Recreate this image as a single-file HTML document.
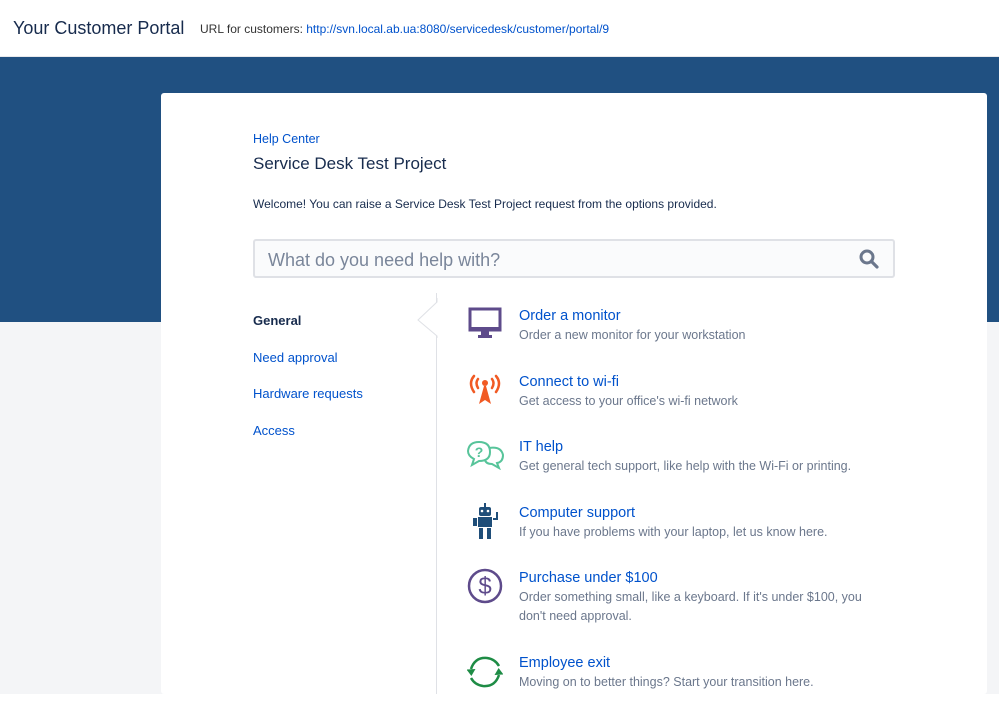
<!DOCTYPE html>
<html><head><meta charset="utf-8"><style>
*{margin:0;padding:0;box-sizing:border-box}
body{width:999px;height:722px;overflow:hidden;background:#fff;font-family:"Liberation Sans",sans-serif;position:relative}
.top{position:absolute;left:0;top:0;width:999px;height:57px;background:#fff;border-bottom:1px solid #e8e9ec}
.top .t{position:absolute;left:13px;top:18px;font-size:18px;color:#172b4d}
.top .u{position:absolute;left:200px;top:22px;font-size:12px;color:#333}
.top .u a{color:#0052cc;text-decoration:none}
.blue{position:absolute;left:0;top:57px;width:999px;height:265px;background:#205081}
.gray{position:absolute;left:0;top:322px;width:999px;height:372px;background:#f4f5f7}
.card{position:absolute;left:161px;top:93px;width:826px;height:601px;background:#fff;border-radius:3px}
a{color:#0052cc;text-decoration:none}
.abs{position:absolute}
.search{position:absolute;left:92px;top:146px;width:642px;height:39px;border:2px solid #dfe1e6;border-radius:3px;background:#fafbfc}
.search span{position:absolute;left:13px;top:9px;font-size:18px;color:#7a869a}
.nav{position:absolute;left:92px;font-size:13px}
.div{position:absolute;left:275px;top:200px;width:1px;height:401px;background:#dfe1e6}
.item{position:absolute;left:358px}
.item .h{font-size:14.5px;color:#0052cc;line-height:19px}
.item .d{font-size:12.5px;color:#6b778c;line-height:19px;width:360px}
.ic{position:absolute;left:306px}
</style></head><body>
<div class="top"><div class="t">Your Customer Portal</div><div class="u">URL for customers: <a>http://svn.local.ab.ua:8080/servicedesk/customer/portal/9</a></div></div>
<div class="blue"></div><div class="gray"></div>
<div class="card">
<a class="abs" style="left:92px;top:39px;font-size:12.5px">Help Center</a>
<div class="abs" style="left:92px;top:61px;font-size:17px;color:#172b4d">Service Desk Test Project</div>
<div class="abs" style="left:92px;top:104px;font-size:12px;color:#172b4d">Welcome! You can raise a Service Desk Test Project request from the options provided.</div>
<div class="search"><span>What do you need help with?</span>
<svg style="position:absolute;right:14px;top:8px" width="20" height="20" viewBox="0 0 20 20"><circle cx="8" cy="8" r="6" fill="none" stroke="#6b778c" stroke-width="3"/><path d="M12.5 12.5L18 18" stroke="#6b778c" stroke-width="3.2" stroke-linecap="round"/></svg></div>
<div class="nav" style="top:220px;font-weight:bold;color:#172b4d">General</div>
<a class="nav" style="top:257px">Need approval</a>
<a class="nav" style="top:293px">Hardware requests</a>
<a class="nav" style="top:330px">Access</a>
<div class="div"></div>
<svg class="abs" style="left:256px;top:205px" width="21" height="40" viewBox="0 0 21 40"><path d="M20 0 L20 4 L1 22 L20 38 L20 40" fill="#fff" stroke="#dfe1e6"/></svg>
<svg class="ic" style="top:214px" width="36" height="34" viewBox="0 0 36 34"><rect x="3" y="2" width="30" height="21" fill="none" stroke="#5e4b8b" stroke-width="3"/><rect x="3" y="20" width="30" height="4" fill="#5e4b8b"/><rect x="14" y="24" width="8" height="5" fill="#5e4b8b"/><rect x="11" y="28" width="14" height="3" fill="#5e4b8b"/></svg>
<div class="item" style="top:214px"><div class="h">Order a monitor</div><div class="d">Order a new monitor for your workstation</div></div>
<svg class="ic" style="top:279px" width="36" height="36" viewBox="0 0 36 36"><g fill="none" stroke="#f15a24" stroke-width="2.5" stroke-linecap="round"><path d="M7 4Q1 11 7 20"/><path d="M29 4Q35 11 29 20"/><path d="M11 7Q8 11 11 16"/><path d="M25 7Q28 11 25 16"/></g><circle cx="18" cy="11" r="3" fill="#f15a24"/><path d="M17 14L12 32L18 28L24 32L19 14Z" fill="#f15a24"/></svg>
<div class="item" style="top:280px"><div class="h">Connect to wi-fi</div><div class="d">Get access to your office's wi-fi network</div></div>
<svg class="ic" style="top:347px" width="38" height="30" viewBox="0 0 38 30"><path d="M22 8Q34 6 36 15Q36 22 30 23L32 28L25 24Q19 24 18 20" fill="none" stroke="#57c49a" stroke-width="2"/><path d="M12 2Q23 2 23 12Q23 21 12 21L5 25L7 19Q1 16 1 11Q2 2 12 2Z" fill="#fff" stroke="#57c49a" stroke-width="2"/><text x="12" y="17" font-size="14" font-weight="bold" fill="#57c49a" text-anchor="middle" font-family="Liberation Sans">?</text></svg>
<div class="item" style="top:345px"><div class="h">IT help</div><div class="d">Get general tech support, like help with the Wi-Fi or printing.</div></div>
<svg class="ic" style="top:409px" width="36" height="38" viewBox="0 0 36 38"><g fill="#1f4e79"><rect x="17" y="1" width="2" height="4"/><rect x="12" y="5" width="12" height="9" rx="2"/><rect x="11" y="15" width="14" height="10"/><rect x="6" y="16" width="4" height="8"/><path d="M26 16h3v-6h2v8h-5z"/><rect x="12" y="26" width="4" height="11"/><rect x="20" y="26" width="4" height="11"/></g><circle cx="15" cy="9" r="1.3" fill="#fff"/><circle cx="21" cy="9" r="1.3" fill="#fff"/></svg>
<div class="item" style="top:411px"><div class="h">Computer support</div><div class="d">If you have problems with your laptop, let us know here.</div></div>
<svg class="ic" style="top:475px" width="36" height="36" viewBox="0 0 36 36"><circle cx="18" cy="18" r="16" fill="none" stroke="#5e4b8b" stroke-width="2.5"/><text x="18" y="26" font-size="24" fill="#5e4b8b" text-anchor="middle" font-family="Liberation Sans">$</text></svg>
<div class="item" style="top:476px"><div class="h">Purchase under $100</div><div class="d">Order something small, like a keyboard. If it's under $100, you don't need approval.</div></div>
<svg class="ic" style="top:562px" width="36" height="34" viewBox="0 0 36 34"><g fill="none" stroke="#1e8c45" stroke-width="2.5"><path d="M4 14Q8 2 20 3Q28 4 32 11"/><path d="M32 20Q28 32 16 31Q8 30 4 23"/></g><path d="M1 12L9 16L2 20Z" fill="#1e8c45" transform="rotate(-30 5 16)"/><path d="M35 22L27 18L34 14Z" fill="#1e8c45" transform="rotate(-30 31 18)"/></svg>
<div class="item" style="top:561px"><div class="h">Employee exit</div><div class="d">Moving on to better things? Start your transition here.</div></div>
</div>
</body></html>
